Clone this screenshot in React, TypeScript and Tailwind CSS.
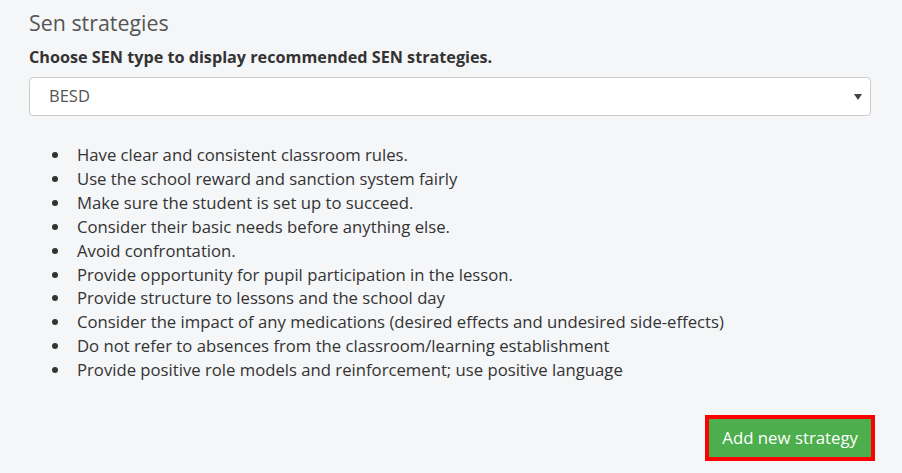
const strategies = [
  "Have clear and consistent classroom rules.",
  "Use the school reward and sanction system fairly",
  "Make sure the student is set up to succeed.",
  "Consider their basic needs before anything else.",
  "Avoid confrontation.",
  "Provide opportunity for pupil participation in the lesson.",
  "Provide structure to lessons and the school day",
  "Consider the impact of any medications (desired effects and undesired side-effects)",
  "Do not refer to absences from the classroom/learning establishment",
  "Provide positive role models and reinforcement; use positive language",
];

export default function App() {
  return (
    <div
      className="h-[473px] w-[902px] overflow-hidden bg-[#f5f6f8] pl-[29px] pr-[31px] pt-[8px]"
      style={{ fontFamily: '"Open Sans", sans-serif' }}
    >
      <h2 className="text-[21.4px] leading-[29px] text-[#555]">Sen strategies</h2>
      <p className="mt-[10px] text-[16.2px] font-bold leading-[21px] text-[#333]">
        Choose SEN type to display recommended SEN strategies.
      </p>
      <div className="mt-[9px] flex h-[39px] items-center justify-between rounded-[4px] border border-[#ccc] bg-white pl-[19px] pr-[8px]">
        <span className="text-[16.5px] text-[#555]">BESD</span>
        <svg width="8" height="6" viewBox="0 0 8 6" className="fill-[#444]">
          <path d="M0 0h8L4 6z" />
        </svg>
      </div>
      <ul className="mt-[27px] list-disc pl-[42px] text-[16.7px] leading-[23.9px] text-[#333]">
        {strategies.map((s) => (
          <li key={s} className="pl-[6px]">
            {s}
          </li>
        ))}
      </ul>
      <div className="mt-[33px] flex justify-end">
        <button className="mr-[-4px] h-[46px] border-[4px] border-[#f00] bg-[#4cae4c] px-[13px] text-[16.8px] text-white">
          Add new strategy
        </button>
      </div>
    </div>
  );
}
